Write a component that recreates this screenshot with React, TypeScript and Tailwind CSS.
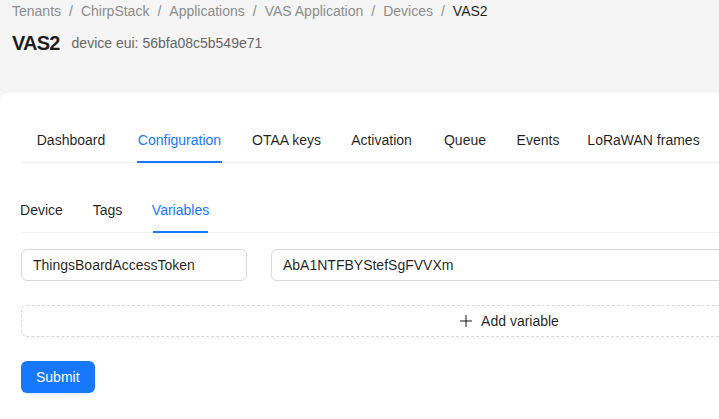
import React from 'react';

// tab labels with the widths they take in the original layout
const mainTabs = [
  { label: 'Dashboard', w: 'w-[68px]' },
  { label: 'Configuration', w: 'w-[85px]' },
  { label: 'OTAA keys', w: 'w-[65px]' },
  { label: 'Activation', w: 'w-[61px]' },
  { label: 'Queue', w: 'w-[42px]' },
  { label: 'Events', w: 'w-[40px]' },
  { label: 'LoRaWAN frames', w: 'w-[107px]' },
];
const subTabs = [
  { label: 'Device', w: 'w-[41px]' },
  { label: 'Tags', w: 'w-[27px]' },
  { label: 'Variables', w: 'w-[55px]' },
];
const crumbs = ['Tenants', 'ChirpStack', 'Applications', 'VAS Application', 'Devices'];

const Tab = ({ label, w, active }: { label: string; w: string; active: boolean }) => (
  <div
    className={
      'relative pt-3 pb-[11px] leading-[22px] whitespace-nowrap flex justify-center ' +
      w +
      (active ? ' text-[#1677ff]' : '')
    }
  >
    {label}
    {active && <span className="absolute left-0 right-0 -bottom-px h-[2px] bg-[#1677ff]" />}
  </div>
);

const App: React.FC = () => {
  return (
    <div
      className="w-[719px] h-[419px] overflow-hidden bg-[#f5f5f5] text-[14px] text-[rgba(0,0,0,0.88)]"
      style={{ fontFamily: '"Liberation Sans", Arial, sans-serif' }}
    >
      <div className="w-[1021px]">
        {/* Page header */}
        <div className="pl-3 h-[93px]">
          <div className="flex items-center h-[22px] leading-[22px] text-[#8c8c8c]">
            {crumbs.map((c) => (
              <React.Fragment key={c}>
                <span>{c}</span>
                <span className="mx-2">/</span>
              </React.Fragment>
            ))}
            <span className="text-[rgba(0,0,0,0.88)]">VAS2</span>
          </div>
          <div className="flex items-center mt-[5px] h-8">
            <h1 className="text-[20px] font-bold leading-8 tracking-[-0.8px] text-[rgba(0,0,0,0.88)] mr-3">VAS2</h1>
            <span className="text-[#666666] leading-[22px]">device eui: 56bfa08c5b549e71</span>
          </div>
        </div>

        {/* Card */}
        <div className="bg-white rounded-lg pt-6 pl-[21px] h-[400px]">
          {/* Main tabs */}
          <div className="flex gap-8 pl-4 border-b border-[#f0f0f0]">
            {mainTabs.map((t) => (
              <Tab key={t.label} label={t.label} w={t.w} active={t.label === 'Configuration'} />
            ))}
          </div>

          {/* Sub tabs */}
          <div className="w-[976px] mt-6 flex gap-8 border-b border-[#f0f0f0]">
            {subTabs.map((t) => (
              <Tab key={t.label} label={t.label} w={t.w} active={t.label === 'Variables'} />
            ))}
          </div>

          {/* Variable row */}
          <div className="w-[976px] mt-4 flex gap-[24px]">
            <div className="w-[226px] h-8 px-[11px] flex items-center border border-[#d9d9d9] rounded-md leading-[22px]">
              ThingsBoardAccessToken
            </div>
            <div className="flex-1 h-8 px-[11px] flex items-center border border-[#d9d9d9] rounded-md leading-[22px]">
              AbA1NTFBYStefSgFVVXm
            </div>
          </div>

          {/* Add variable */}
          <div className="w-[976px] mt-6 h-8 flex items-center justify-center gap-2 border border-dashed border-[#d9d9d9] rounded-md shadow-[0_2px_0_rgba(0,0,0,0.02)]">
            <svg width="14" height="14" viewBox="0 0 14 14" fill="none" stroke="rgba(0,0,0,0.7)" strokeWidth="1.3">
              <line x1="7" y1="1" x2="7" y2="13" />
              <line x1="1" y1="7" x2="13" y2="7" />
            </svg>
            <span>Add variable</span>
          </div>

          {/* Submit */}
          <button className="mt-6 h-8 px-[15px] rounded-md bg-[#1677ff] text-white leading-[22px] shadow-[0_2px_0_rgba(5,145,255,0.1)]">
            Submit
          </button>
        </div>
      </div>
    </div>
  );
};

export default App;
